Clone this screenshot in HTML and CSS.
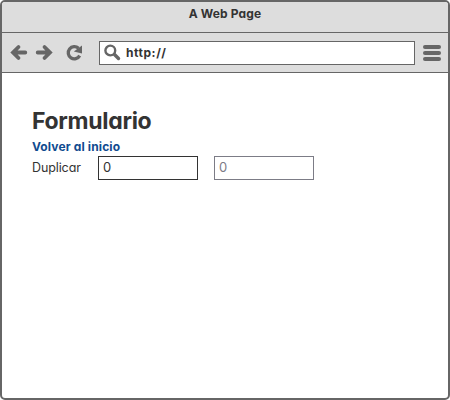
FILE: index.html
```html
<!DOCTYPE html>
<html lang="es">
<head>
<meta charset="utf-8">
<title>A Web Page</title>
<link rel="stylesheet" href="styles.css">
</head>
<body>
<div class="window">
  <header class="titlebar">A Web Page</header>
  <nav class="toolbar">
    <svg class="nav-icons" width="76" height="20" viewBox="0 0 76 20" fill="none" stroke="#666" stroke-width="3.8">
      <path d="M15.3 9.5H4M8.5 4L3 9.5L8.5 15" stroke-linecap="round"/>
      <path d="M27.7 9.5H39M34.5 4L40 9.5L34.5 15" stroke-linecap="round"/>
      <path d="M68.5 5.2A6.1 6.1 0 1 0 69.7 12.6" stroke-width="3.3"/>
      <path d="M72 2.5V10.5L63.8 8.5Z" fill="#666" stroke="none"/>
    </svg>
    <div class="address">
      <svg width="18" height="18" viewBox="0 0 18 18" fill="none" stroke="#666">
        <circle cx="6.3" cy="6.5" r="4.9" stroke-width="2.4"/>
        <path d="M10.5 10.5L14.5 14.5" stroke-width="3.4" stroke-linecap="round"/>
      </svg>
      <span class="url">http://</span>
    </div>
    <div class="menu"><i></i><i></i><i></i></div>
  </nav>
  <main class="content">
    <h1>Formulario</h1>
    <a class="back">Volver al inicio</a>
    <div class="row">
      <span class="label">Duplicar</span>
      <div class="field">0</div>
      <div class="field disabled">0</div>
    </div>
  </main>
</div>
</body>
</html>
```
FILE: styles.css
```css
* { box-sizing: border-box; }
body {
  margin: 0;
  background: #fff;
  color: #333;
  font-family: Inter, Lato, sans-serif;
  font-feature-settings: "cv11";
  font-size: 13px;
}
.window {
  width: 450px;
  height: 400px;
  border: 2px solid #666;
  border-radius: 5px;
  overflow: hidden;
  background: #fff;
}
.titlebar {
  height: 31px;
  background: #ddd;
  border-bottom: 1px solid #666;
  text-align: center;
  font-size: 12px;
  font-weight: 700;
  line-height: 24px;
  letter-spacing: 0.15px;
}
.toolbar {
  display: flex;
  align-items: center;
  height: 40px;
  background: #ddd;
  border-bottom: 1px solid #666;
  padding: 0 7px 0 8px;
}
.nav-icons { flex: none; }
.address {
  display: flex;
  align-items: center;
  width: 316px;
  height: 24px;
  margin-left: 13px;
  padding-left: 4px;
  border: 1px solid #666;
  background: #fff;
}
.url {
  margin-left: 4px;
  font-size: 12px;
  font-weight: 700;
  letter-spacing: 0.55px;
}
.menu {
  display: flex;
  flex-direction: column;
  gap: 2px;
  width: 18px;
  margin-left: 8px;
}
.menu i { height: 4px; border-radius: 2px; background: #666; }
.content { padding: 33px 30px; }
h1 {
  margin: 0;
  font-size: 23px;
  line-height: 30px;
  font-weight: 700;
  letter-spacing: -0.3px;
}
.back {
  display: block;
  padding-top: 1px;
  height: 20px;
  line-height: 20px;
  font-size: 12px;
  font-weight: 700;
  letter-spacing: 0.13px;
  color: #114b8f;
}
.row { display: flex; align-items: center; height: 24px; }
.label {
  width: 66px;
  padding-bottom: 2px;
  font-size: 12.5px;
  letter-spacing: -0.1px;
}
.field {
  width: 100px;
  height: 24px;
  padding-left: 4px;
  border: 1px solid #333;
  line-height: 21px;
}
.disabled { margin-left: 16px; border-color: #7c7c86; color: #7c7c86; }
```
